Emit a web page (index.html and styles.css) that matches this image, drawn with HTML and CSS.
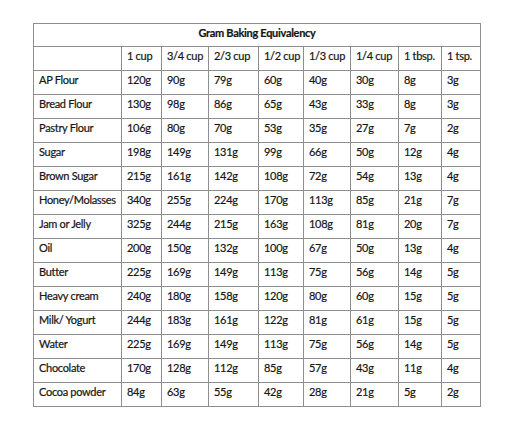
FILE: index.html
```html
<!DOCTYPE html>
<html>
<head>
<meta charset="utf-8">
<link rel="stylesheet" href="styles.css">
</head>
<body>
<div class="page">
<table class="chart">
<colgroup>
<col class="c-name"><col class="c1"><col class="c2"><col class="c3"><col class="c4"><col class="c5"><col class="c6"><col class="c7"><col class="c8">
</colgroup>
<tr class="title-row"><td colspan="9" class="title">Gram Baking Equivalency</td></tr>
<tr><td></td><td>1 cup</td><td>3/4 cup</td><td>2/3 cup</td><td>1/2 cup</td><td>1/3 cup</td><td>1/4 cup</td><td>1 tbsp.</td><td>1 tsp.</td></tr>
<tr><td>AP Flour</td><td>120g</td><td>90g</td><td>79g</td><td>60g</td><td>40g</td><td>30g</td><td>8g</td><td>3g</td></tr>
<tr><td>Bread Flour</td><td>130g</td><td>98g</td><td>86g</td><td>65g</td><td>43g</td><td>33g</td><td>8g</td><td>3g</td></tr>
<tr><td>Pastry Flour</td><td>106g</td><td>80g</td><td>70g</td><td>53g</td><td>35g</td><td>27g</td><td>7g</td><td>2g</td></tr>
<tr><td>Sugar</td><td>198g</td><td>149g</td><td>131g</td><td>99g</td><td>66g</td><td>50g</td><td>12g</td><td>4g</td></tr>
<tr><td>Brown Sugar</td><td>215g</td><td>161g</td><td>142g</td><td>108g</td><td>72g</td><td>54g</td><td>13g</td><td>4g</td></tr>
<tr><td>Honey/Molasses</td><td>340g</td><td>255g</td><td>224g</td><td>170g</td><td>113g</td><td>85g</td><td>21g</td><td>7g</td></tr>
<tr><td>Jam or Jelly</td><td>325g</td><td>244g</td><td>215g</td><td>163g</td><td>108g</td><td>81g</td><td>20g</td><td>7g</td></tr>
<tr><td>Oil</td><td>200g</td><td>150g</td><td>132g</td><td>100g</td><td>67g</td><td>50g</td><td>13g</td><td>4g</td></tr>
<tr><td>Butter</td><td>225g</td><td>169g</td><td>149g</td><td>113g</td><td>75g</td><td>56g</td><td>14g</td><td>5g</td></tr>
<tr><td>Heavy cream</td><td>240g</td><td>180g</td><td>158g</td><td>120g</td><td>80g</td><td>60g</td><td>15g</td><td>5g</td></tr>
<tr><td>Milk/ Yogurt</td><td>244g</td><td>183g</td><td>161g</td><td>122g</td><td>81g</td><td>61g</td><td>15g</td><td>5g</td></tr>
<tr><td>Water</td><td>225g</td><td>169g</td><td>149g</td><td>113g</td><td>75g</td><td>56g</td><td>14g</td><td>5g</td></tr>
<tr><td>Chocolate</td><td>170g</td><td>128g</td><td>112g</td><td>85g</td><td>57g</td><td>43g</td><td>11g</td><td>4g</td></tr>
<tr><td>Cocoa powder</td><td>84g</td><td>63g</td><td>55g</td><td>42g</td><td>28g</td><td>21g</td><td>5g</td><td>2g</td></tr>
</table>
</div>
</body>
</html>
```

FILE: styles.css
```css
html, body {
  margin: 0;
  padding: 0;
  background: #ffffff;
}
.page {
  padding: 23px 0 0 33px;
}
.chart {
  border-collapse: collapse;
  table-layout: fixed;
  width: 447px;
  font-family: Lato, "Liberation Sans", sans-serif;
  font-size: 11px;
  letter-spacing: -0.3px;
  color: #151515;
  -webkit-text-stroke: 0.2px #151515;
}
.c-name { width: 88px; }
.c1 { width: 40px; }
.c2 { width: 47px; }
.c3 { width: 50px; }
.c4 { width: 45px; }
.c5 { width: 47px; }
.c6 { width: 48px; }
.c7 { width: 43px; }
.c8 { width: 39px; }
.chart td {
  border: 1px solid #8e8e8e;
  height: 24px;
  box-sizing: border-box;
  padding: 2px 0 0 5px;
  vertical-align: top;
  line-height: 13px;
  white-space: nowrap;
  overflow: hidden;
}
.title-row td {
  height: 23px;
}
.chart td.title {
  text-align: center;
  font-weight: bold;
  padding-left: 0;
}
```
